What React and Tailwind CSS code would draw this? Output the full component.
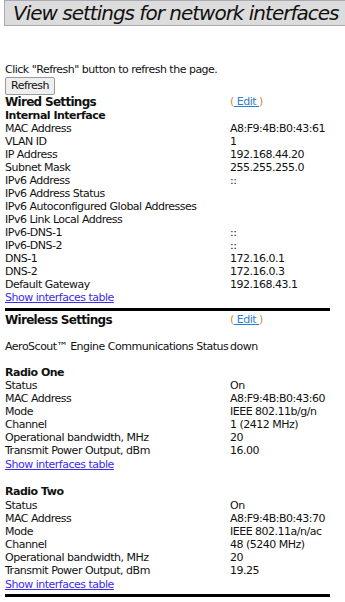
const wired = [
  ["MAC Address", "A8:F9:4B:B0:43:61"],
  ["VLAN ID", "1"],
  ["IP Address", "192.168.44.20"],
  ["Subnet Mask", "255.255.255.0"],
  ["IPv6 Address", "::"],
  ["IPv6 Address Status", ""],
  ["IPv6 Autoconfigured Global Addresses", ""],
  ["IPv6 Link Local Address", ""],
  ["IPv6-DNS-1", "::"],
  ["IPv6-DNS-2", "::"],
  ["DNS-1", "172.16.0.1"],
  ["DNS-2", "172.16.0.3"],
  ["Default Gateway", "192.168.43.1"],
];

const radioOne = [
  ["Status", "On"],
  ["MAC Address", "A8:F9:4B:B0:43:60"],
  ["Mode", "IEEE 802.11b/g/n"],
  ["Channel", "1 (2412 MHz)"],
  ["Operational bandwidth, MHz", "20"],
  ["Transmit Power Output, dBm", "16.00"],
];

const radioTwo = [
  ["Status", "On"],
  ["MAC Address", "A8:F9:4B:B0:43:70"],
  ["Mode", "IEEE 802.11a/n/ac"],
  ["Channel", "48 (5240 MHz)"],
  ["Operational bandwidth, MHz", "20"],
  ["Transmit Power Output, dBm", "19.25"],
];

function Row({ label, value }) {
  return (
    <div className="grid grid-cols-[225px_1fr] h-[13px] leading-[13px] whitespace-nowrap">
      <div>{label}</div>
      <div>{value}</div>
    </div>
  );
}

function EditLink() {
  return (
    <span className="font-normal text-[11px] tracking-[-0.5px]">
      <span className="text-[#c88a3a]">(</span>
      <a href="#" className="text-[#2a7fd4] underline"> Edit </a>
      <span className="text-[#c88a3a]">)</span>
    </span>
  );
}

function ShowLink() {
  return (
    <div className="h-[13px] leading-[13px]">
      <a href="#" className="text-[#3a2cf0] underline">Show interfaces table</a>
    </div>
  );
}

export default function App() {
  return (
    <div
      className="bg-white min-h-[602px] text-[#111] text-[11px] tracking-[-0.5px]"
      style={{ fontFamily: "'DejaVu Sans', Verdana, sans-serif" }}
    >
      <div className="ml-1 h-[26px] bg-[#dcdcdc] border border-[#a7a9b4] border-r-0 pl-[8px] whitespace-nowrap overflow-hidden">
        <span className="italic text-[20px] leading-[24px] tracking-[-1px] text-[#111]">
          View settings for network interfaces
        </span>
      </div>

      <div className="pl-[5px] pr-[15px]">
        <div className="mt-[37px] h-[13px] leading-[13px]">Click "Refresh" button to refresh the page.</div>
        <button className="mt-[1px] h-[18px] px-[5px] text-[11px] leading-[16px] bg-[#efefef] border border-[#9a9a9a] rounded-[2px]">
          Refresh
        </button>

        <div className="grid grid-cols-[225px_1fr] h-[14px] leading-[14px] items-center">
          <div className="font-bold text-[12px] tracking-[-0.7px]">Wired Settings</div>
          <EditLink />
        </div>
        <div className="font-bold h-[13px] leading-[13px]">Internal Interface</div>
        {wired.map(([l, v]) => (
          <Row key={l} label={l} value={v} />
        ))}
        <ShowLink />
        <div className="mt-[4px] h-[3px] bg-black" />

        <div className="mt-[2px] grid grid-cols-[225px_1fr] h-[14px] leading-[14px] items-center">
          <div className="font-bold text-[12px] tracking-[-0.7px]">Wireless Settings</div>
          <EditLink />
        </div>
        <div className="h-[13px]" />
        <Row label="AeroScout™ Engine Communications Status" value="down" />
        <div className="h-[13px]" />

        <div className="font-bold h-[13px] leading-[13px]">Radio One</div>
        {radioOne.map(([l, v]) => (
          <Row key={l} label={l} value={v} />
        ))}
        <div className="mt-[1px]">
          <ShowLink />
        </div>
        <div className="h-[14px]" />

        <div className="font-bold h-[14px] leading-[14px]">Radio Two</div>
        {radioTwo.map(([l, v]) => (
          <Row key={l} label={l} value={v} />
        ))}
        <div className="mt-[1px]">
          <ShowLink />
        </div>
        <div className="mt-[3px] h-[3px] bg-black" />
      </div>
    </div>
  );
}
